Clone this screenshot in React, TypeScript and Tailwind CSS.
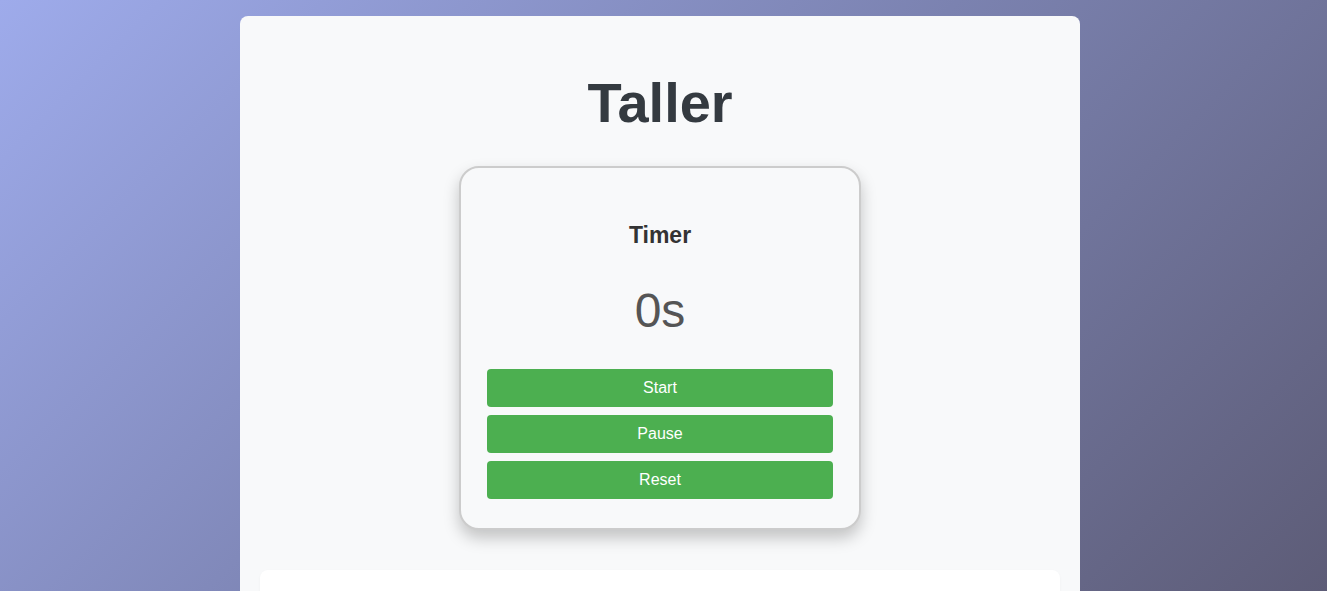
import React from "react";

export default function App() {
  return (
    <div className="h-[591px] w-full overflow-hidden bg-[linear-gradient(135deg,#9eabeb_0%,#7b82b0_50%,#5d5c77_100%)] font-['Liberation_Sans',Arial,sans-serif]">
      <div className="ml-[240px] mt-4 w-[840px] rounded-lg bg-[#f8f9fa] px-5 pt-[55px] pb-10">
        <h1 className="text-center text-[56px] font-bold leading-[64px] text-[#343a40]">Taller</h1>
        <div className="mx-auto mt-[31px] w-[402px] rounded-[20px] border-2 border-[#cccccc] bg-[#f8f9fa] px-[26px] pt-[54px] pb-[29px] shadow-[0_8px_16px_rgba(0,0,0,0.22)]">
          <h2 className="text-center text-[23px] font-bold leading-[27px] text-[#333333]">Timer</h2>
          <div className="mt-[34px] text-center text-[48px] leading-[55px] text-[#555555]">0s</div>
          <div className="mt-[31px] flex flex-col gap-2">
            {["Start", "Pause", "Reset"].map((t) => (
              <button
                key={t}
                className="flex h-[38px] w-full items-center justify-center rounded bg-[#4caf50] text-[16px] text-white"
              >
                {t}
              </button>
            ))}
          </div>
        </div>
        <div className="mt-[40px] h-[200px] rounded-lg bg-white shadow-[0_1px_3px_rgba(0,0,0,0.04)]"></div>
      </div>
    </div>
  );
}
